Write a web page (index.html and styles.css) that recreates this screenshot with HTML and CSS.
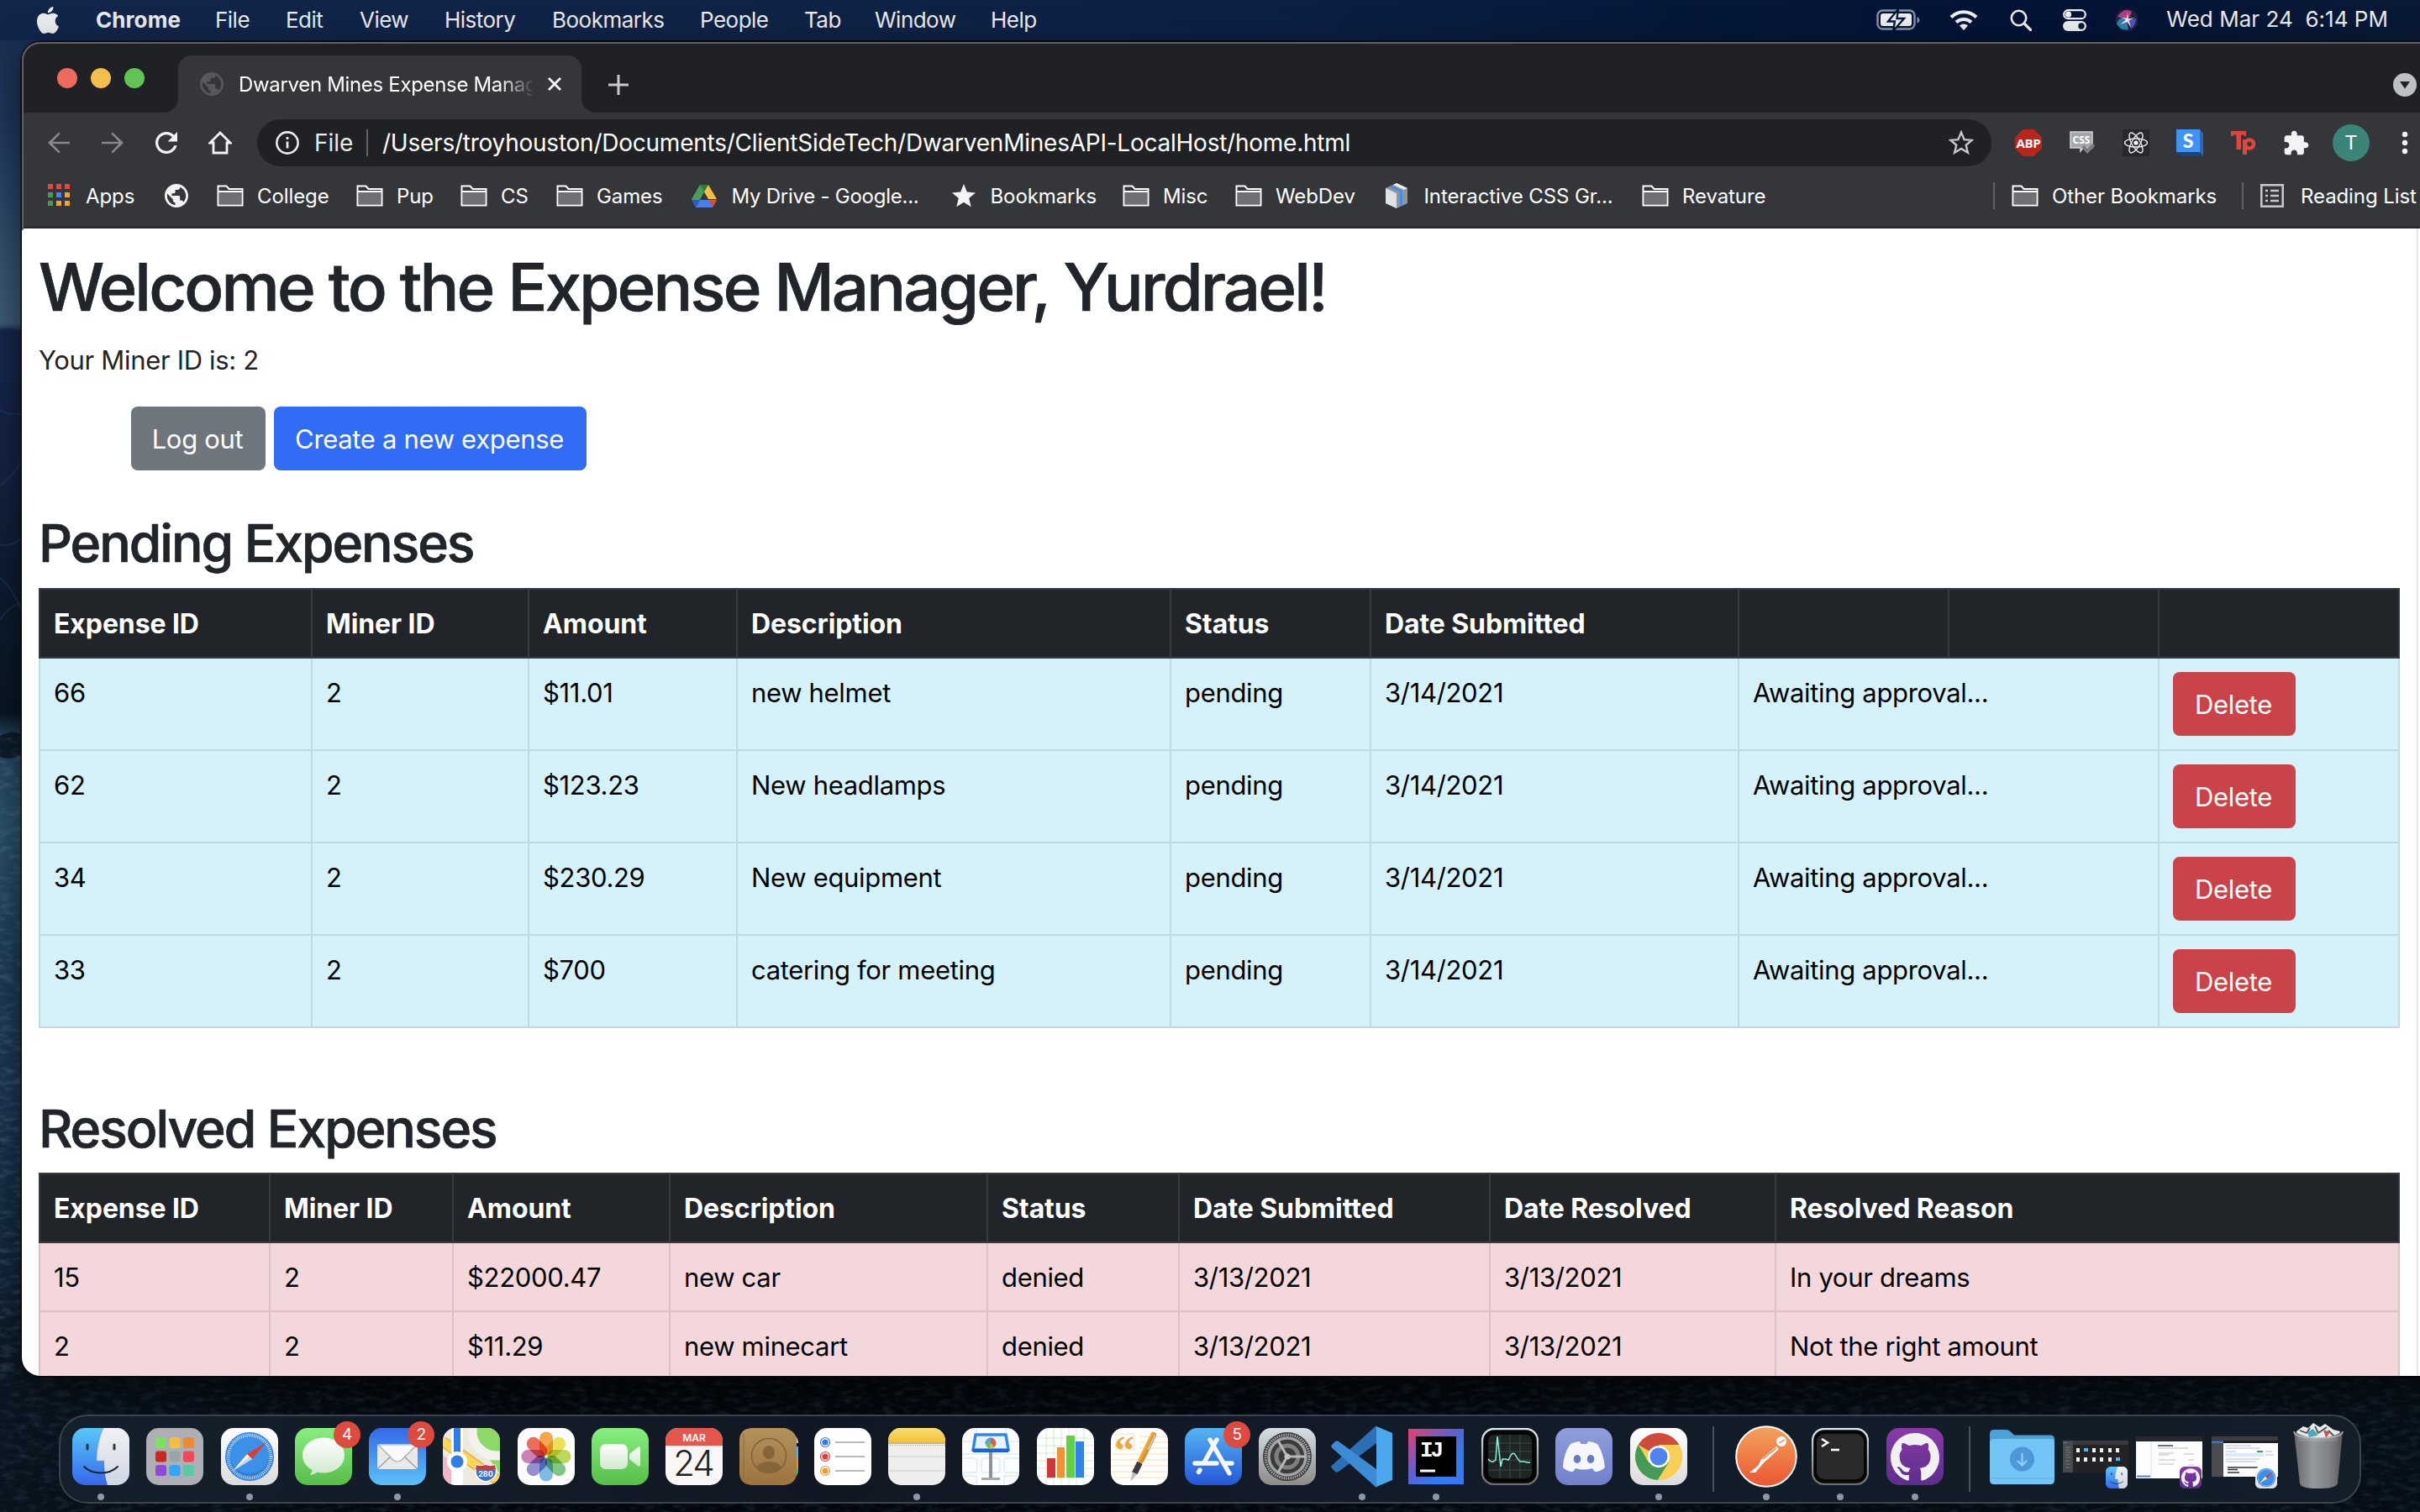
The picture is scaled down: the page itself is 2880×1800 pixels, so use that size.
FILE: index.html
```html
<!DOCTYPE html>
<html lang="en">
<head>
<meta charset="utf-8">
<title>Dwarven Mines Expense Manager</title>
<link rel="stylesheet" href="styles.css">
</head>
<body>
<svg class="defs" width="0" height="0">
  <defs>
    <linearGradient id="gBlue" x1="0" y1="0" x2="0" y2="1"><stop offset="0" stop-color="#5ac8f9"/><stop offset="1" stop-color="#3667ea"/></linearGradient>
    <linearGradient id="gMail" x1="0" y1="0" x2="0" y2="1"><stop offset="0" stop-color="#3668e8"/><stop offset="1" stop-color="#5bc1f8"/></linearGradient>
    <linearGradient id="gStore" x1="0" y1="0" x2="0" y2="1"><stop offset="0" stop-color="#54b4f2"/><stop offset="1" stop-color="#2657d8"/></linearGradient>
    <linearGradient id="gGreen" x1="0" y1="0" x2="0" y2="1"><stop offset="0" stop-color="#86ef7f"/><stop offset="1" stop-color="#58bd49"/></linearGradient>
    <linearGradient id="gWhite" x1="0" y1="0" x2="0" y2="1"><stop offset="0" stop-color="#fff"/><stop offset="1" stop-color="#dcdcdc"/></linearGradient>
    <linearGradient id="gFace" x1="0" y1="0" x2="0" y2="1"><stop offset="0" stop-color="#f1f1f3"/><stop offset="1" stop-color="#ced6e4"/></linearGradient>
    <linearGradient id="gTan" x1="0" y1="0" x2="0" y2="1"><stop offset="0" stop-color="#b3925c"/><stop offset="1" stop-color="#9c7340"/></linearGradient>
    <linearGradient id="gYellow" x1="0" y1="0" x2="0" y2="1"><stop offset="0" stop-color="#fbdf6e"/><stop offset="1" stop-color="#f2c23a"/></linearGradient>
    <linearGradient id="gGear" x1="0" y1="0" x2="0" y2="1"><stop offset="0" stop-color="#d6dfe4"/><stop offset="1" stop-color="#8c8a86"/></linearGradient>
    <linearGradient id="gDisc" x1="0" y1="0" x2="0" y2="1"><stop offset="0" stop-color="#8f9edb"/><stop offset="1" stop-color="#7180cb"/></linearGradient>
    <linearGradient id="gPost" x1="0" y1="0" x2="0" y2="1"><stop offset="0" stop-color="#f2a35f"/><stop offset="1" stop-color="#ec5430"/></linearGradient>
    <linearGradient id="gGit" x1="0" y1="0" x2="0" y2="1"><stop offset="0" stop-color="#8a3aa8"/><stop offset="1" stop-color="#5c2e8c"/></linearGradient>
    <linearGradient id="gIj" x1="0" y1="0" x2="1" y2="1"><stop offset="0" stop-color="#e8406c"/><stop offset=".45" stop-color="#5a62d0"/><stop offset=".7" stop-color="#2f7bf0"/><stop offset="1" stop-color="#3a78f0"/></linearGradient>
    <linearGradient id="gTrash" x1="0" y1="0" x2="1" y2="0"><stop offset="0" stop-color="#6d6f71"/><stop offset=".4" stop-color="#a0a2a4"/><stop offset=".75" stop-color="#85878a"/><stop offset="1" stop-color="#5d5f61"/></linearGradient>
    <linearGradient id="gMetal" x1="0" y1="0" x2="0" y2="1"><stop offset="0" stop-color="#d8eef0"/><stop offset="1" stop-color="#6b6b6b"/></linearGradient>
    <linearGradient id="gPen" x1="0" y1="0" x2="1" y2="0"><stop offset="0" stop-color="#f7b545"/><stop offset="1" stop-color="#d27d1d"/></linearGradient>
    <linearGradient id="gCam" x1="0" y1="0" x2="0" y2="1"><stop offset="0" stop-color="#fff"/><stop offset="1" stop-color="#cfe8ca"/></linearGradient>
    <clipPath id="tile"><rect width="68" height="68" rx="15"/></clipPath>
    <filter id="sea" x="0" y="0" width="100%" height="100%"><feTurbulence type="fractalNoise" baseFrequency=".06 .16" numOctaves="4" seed="4"/><feColorMatrix values="0 0 0 0 .25  0 0 0 0 .42  0 0 0 0 .55  1.6 0 0 0 -.72"/></filter>
  </defs>
  <symbol id="folder" viewBox="0 0 32 26"><path d="M1.500 24.500v-23h10l3 3.500h16v19.500z" fill="none" stroke="#fff" stroke-width="2"/><path d="M3 9h26v14H3z" fill="#6f7073"/><path d="M2 8h28" stroke="#fff" stroke-width="2"/></symbol>
  <symbol id="globe" viewBox="2 2 20 20"><path d="M12 2C6.480 2 2 6.480 2 12s4.480 10 10 10 10-4.480 10-10S17.520 2 12 2zm-1 17.930c-3.950-.49-7-3.850-7-7.930 0-.62.08-1.210.21-1.790L9 15v1c0 1.100.9 2 2 2v1.930zm6.900-2.540c-.26-.81-1-1.390-1.900-1.390h-1v-3c0-.55-.45-1-1-1H8v-2h2c.55 0 1-.45 1-1V7h2c1.100 0 2-.9 2-2v-.41c2.930 1.190 5 4.060 5 7.410 0 2.080-.8 3.970-2.100 5.390z"/></symbol>
  <symbol id="finder" viewBox="0 0 68 68"><g clip-path="url(#tile)"><rect width="68" height="68" fill="url(#gBlue)"/><path d="M37 0c-5 12-8 25-8 39h9c0 11 1 20 4 29h26V0z" fill="url(#gFace)"/></g><path d="M29 39h9.500M37 0c-5 12-8 25-8 39" fill="none" stroke="#8fa3c4" stroke-width=".6"/><path d="M18 20v5M50 20v5" stroke="#2b3645" stroke-width="3" stroke-linecap="round"/><path d="M14 46c10 10 30 10 40 0" fill="none" stroke="#1c2530" stroke-width="2" stroke-linecap="round"/></symbol>
  <symbol id="safari" viewBox="0 0 68 68"><rect width="68" height="68" rx="15" fill="url(#gWhite)"/><circle cx="34" cy="34" r="29" fill="#2f7de0"/><circle cx="34" cy="30" r="24" fill="#46a2ee" opacity=".55"/><circle cx="34" cy="34" r="25.500" fill="none" stroke="#dcebfa" stroke-width="4" stroke-dasharray=".9 1.325"/><path d="M54 17L31 31l6 6z" fill="#e2392f"/><path d="M14 51l17-20 6 6z" fill="#f4f4f4"/><path d="M14 51l20-17 3 3z" fill="#cfd4da"/></symbol>
  <symbol id="github" viewBox="0 0 68 68"><rect width="68" height="68" rx="15" fill="url(#gGit)"/><path transform="translate(5 6) scale(3.625)" fill="#f1f1f3" d="M8 0C3.580 0 0 3.580 0 8c0 3.540 2.290 6.530 5.470 7.590.4.070.55-.17.55-.38 0-.19-.01-.82-.01-1.490-2.010.37-2.530-.49-2.690-.94-.09-.23-.48-.94-.82-1.130-.28-.15-.68-.52-.01-.53.63-.01 1.080.58 1.230.82.72 1.210 1.870.87 2.330.66.07-.52.28-.87.51-1.070-1.780-.2-3.640-.89-3.640-3.950 0-.87.31-1.590.82-2.150-.08-.2-.36-1.020.08-2.120 0 0 .67-.21 2.200.82.64-.18 1.320-.27 2-.27s1.360.09 2 .27c1.530-1.040 2.200-.82 2.200-.82.44 1.100.16 1.920.08 2.120.51.56.82 1.270.82 2.150 0 3.070-1.870 3.750-3.650 3.950.29.25.54.73.54 1.480 0 1.070-.01 1.930-.01 2.200 0 .21.15.46.55.38A8.010 8.010 0 0 0 16 8c0-4.420-3.580-8-8-8z"/></symbol>
</svg>

<svg class="waves" width="2880" height="162"><rect width="2880" height="162" filter="url(#sea)"/></svg>
<svg class="shore" width="26" height="1590" viewBox="0 0 26 1590" preserveAspectRatio="none">
  <path d="M0 345q13-5 26 2v58q-14 10-26 5z" fill="#17284e"/>
  <path d="M0 440q12 8 26 4M0 530q16-12 26-30M0 600q14 4 26-8M0 690q12-18 26-20M0 640q14 10 26 40" fill="none" stroke="#2a4a70" stroke-width="2" opacity=".6"/>
  <path d="M0 828q14-8 26-2l0 24q-13 8-26 3z" fill="#050c16"/>
  <rect y="830" width="26" height="760" filter="url(#sea)" opacity=".5"/>
</svg>

<header class="menubar">
  <nav class="menus">
    <svg class="apple" viewBox="2.600 0 18.800 24"><path fill="#e9ebef" d="M12.152 6.896c-.948 0-2.415-1.078-3.960-1.040-2.040.027-3.910 1.183-4.961 3.014-2.117 3.675-.546 9.103 1.519 12.090 1.013 1.454 2.208 3.090 3.792 3.039 1.520-.065 2.090-.987 3.935-.987 1.831 0 2.350.987 3.960.948 1.637-.026 2.676-1.480 3.676-2.948 1.156-1.688 1.636-3.325 1.662-3.415-.039-.013-3.182-1.221-3.220-4.857-.026-3.040 2.480-4.494 2.597-4.559-1.429-2.090-3.623-2.324-4.390-2.376-2-.156-3.675 1.090-4.610 1.090zM15.530 3.830c.843-1.012 1.400-2.427 1.245-3.830-1.207.052-2.662.805-3.532 1.818-.78.896-1.454 2.338-1.273 3.714 1.338.104 2.715-.688 3.559-1.701"/></svg>
    <b>Chrome</b><span>File</span><span>Edit</span><span>View</span><span>History</span><span>Bookmarks</span><span>People</span><span>Tab</span><span>Window</span><span>Help</span>
  </nav>
  <div class="status">
    <svg width="52" height="28" viewBox="0 0 52 28"><rect x="1.500" y="2.500" width="44" height="22" rx="6" fill="none" stroke="#8b93a8" stroke-width="2.400"/><rect x="5" y="6" width="37" height="15" rx="3" fill="#eceef2"/><path d="M48.500 10v8q3-1.500 3-4t-3-4z" fill="#8b93a8"/><path d="M26 1L14 15.500h8L20 27l13-15h-8.500z" fill="#eceef2" stroke="#06173a" stroke-width="2.400"/></svg>
    <svg width="34" height="26" viewBox="0 0 34 26"><g fill="none" stroke="#eceef2" stroke-width="4"><path d="M2 9.500a21 21 0 0 1 30 0"/><path d="M8 15.500a13 13 0 0 1 18 0"/></g><path d="M12 19.500a7.500 7.500 0 0 1 10 0L17 25z" fill="#eceef2"/></svg>
    <svg width="26" height="26" viewBox="0 0 26 26"><circle cx="10.500" cy="10.500" r="8.700" fill="none" stroke="#eceef2" stroke-width="2.600"/><path d="M17 17l7.500 7.500" stroke="#eceef2" stroke-width="3.200" stroke-linecap="round"/></svg>
    <svg width="28" height="26" viewBox="0 0 28 26"><rect x="1.200" y="1.200" width="25.600" height="10" rx="5" fill="none" stroke="#eceef2" stroke-width="2.200"/><circle cx="6.500" cy="6.200" r="3.600" fill="#eceef2"/><rect y="14" width="28" height="12" rx="6" fill="#eceef2"/><circle cx="22" cy="20" r="3.700" fill="#06173a"/></svg>
    <svg width="28" height="28" viewBox="0 0 28 28"><circle cx="14" cy="14" r="13.500" fill="#23243f"/><path d="M3 10q8-12 17-6l-4 10z" fill="#d2478d" opacity=".8"/><path d="M2 18q4-10 12-5l2 12q-9 2-14-7z" fill="#2f9ac9" opacity=".8"/><path d="M14 14l11-2q0 8-6 12z" fill="#5b5fd0" opacity=".85"/><path d="M15 5l.8 7.500 7.200-1.500-6.500 3.500 2.500 8-4.500-6.500-8 3 6.500-5.500-4.500-2.500 5.500.8z" fill="#fff" opacity=".9"/></svg>
    <time>Wed Mar 24&nbsp; 6:14 PM</time>
  </div>
</header>

<main class="window">
  <div class="tabstrip">
    <i class="light red"></i><i class="light amber"></i><i class="light green"></i>
    <div class="tab">
      <svg width="28" height="28" fill="#56585d"><use href="#globe"/></svg>
      <span class="tab-title">Dwarven Mines Expense Manager</span>
      <svg width="18" height="18" viewBox="0 0 18 18"><path d="M2 2l14 14M16 2L2 16" stroke="#f1f3f4" stroke-width="2.800"/></svg>
    </div>
    <svg class="newtab" width="24" height="24" viewBox="0 0 24 24"><path d="M12 0v24M0 12h24" stroke="#c6c9cd" stroke-width="3"/></svg>
    <svg class="tabsearch" width="28" height="28" viewBox="0 0 28 28"><circle cx="14" cy="14" r="14" fill="#bdc1c6"/><path d="M8 10h12l-6 8.500z" fill="#202124"/></svg>
  </div>

  <div class="toolbar">
    <svg width="26" height="26" viewBox="4 4 16 16" fill="#86888b"><path d="M20 11.200H7.300l5.700-5.800L12 4.300l-8 7.700 8 7.700 1-1.100-5.700-5.800H20z"/></svg>
    <svg width="26" height="26" viewBox="4 4 16 16" fill="#86888b"><path d="M4 11.200h12.700L11 5.400l1-1.100 8 7.700-8 7.700-1-1.100 5.700-5.800H4z"/></svg>
    <svg width="26" height="26" viewBox="4 4 16 16" fill="#f1f3f4"><path d="M17.650 6.350C16.200 4.900 14.210 4 12 4c-4.420 0-7.990 3.580-7.990 8s3.570 8 7.990 8c3.730 0 6.840-2.550 7.730-6h-2.080c-.82 2.330-3.040 4-5.650 4-3.310 0-6-2.690-6-6s2.690-6 6-6c1.660 0 3.140.69 4.220 1.780L13 11h7V4l-2.350 2.350z"/></svg>
    <svg width="28" height="28" viewBox="0 0 28 28"><path d="M2 14L14 2l12 12h-4v12H6V14z" fill="none" stroke="#f1f3f4" stroke-width="2.800"/></svg>
    <div class="omnibox">
      <svg width="28" height="28" viewBox="0 0 28 28"><circle cx="14" cy="14" r="12.600" fill="none" stroke="#e8eaed" stroke-width="2.600"/><path d="M14 12.500v8M14 7v3" stroke="#e8eaed" stroke-width="2.800"/></svg>
      <span class="scheme">File</span>
      <span class="url">/Users/troyhouston/Documents/ClientSideTech/DwarvenMinesAPI-LocalHost/home.html</span>
      <svg width="30" height="30" viewBox="0 0 30 30"><path d="M15 2.500l3.600 8.700 9 .7-6.900 5.900 2.200 9L15 22l-7.900 4.800 2.200-9-6.900-5.900 9-.7z" fill="none" stroke="#c5c8cc" stroke-width="2.400"/></svg>
    </div>
    <div class="extensions">
      <svg width="32" height="32" viewBox="0 0 32 32"><path d="M9.500 0h13L32 9.500v13L22.500 32h-13L0 22.500v-13z" fill="#b8261b"/><text x="16" y="21.500" class="abp">ABP</text></svg>
      <svg width="32" height="32" viewBox="0 0 32 32"><path d="M2 3h26v19H17l-3 4v-4H2z" fill="#a5a6a8" stroke="#d4d4d4" stroke-width="1.500"/><text x="15" y="17" class="css">CSS</text><path d="M17 20l5 6 8-8" fill="none" stroke="#7d7e80" stroke-width="4"/></svg>
      <svg width="32" height="32" viewBox="0 0 32 32"><rect width="32" height="32" fill="#27282b"/><g fill="none" stroke="#f2f2f2" stroke-width="1.400"><ellipse cx="16" cy="16" rx="13.500" ry="5"/><ellipse cx="16" cy="16" rx="13.500" ry="5" transform="rotate(60 16 16)"/><ellipse cx="16" cy="16" rx="13.500" ry="5" transform="rotate(120 16 16)"/></g><circle cx="16" cy="16" r="2.600" fill="#fff"/></svg>
      <svg width="32" height="32" viewBox="0 0 32 32"><path d="M0 27l5 5h27V5l-4-4z" fill="#1d4377"/><path d="M28 0l4 5v27l-4-5z" fill="#2c66b8"/><rect width="28" height="27" fill="#3f93f5"/><text x="14" y="22" class="ess">S</text></svg>
      <svg width="32" height="32" viewBox="0 0 32 32"><path d="M1 2h18v6h-2.500V6.500H13V24H7.500V6.500H4V8H1z" fill="#dd473e"/><path d="M17.500 12v18" stroke="#dd473e" stroke-width="5"/><circle cx="23" cy="17.500" r="5" fill="none" stroke="#dd473e" stroke-width="4.600"/></svg>
      <svg width="30" height="30" viewBox="1.500 .5 22 22" fill="#f1f3f4"><path d="M20.500 11H19V7c0-1.100-.9-2-2-2h-4V3.500C13 2.120 11.880 1 10.500 1S8 2.120 8 3.500V5H4c-1.100 0-1.990.9-1.990 2v3.800H3.500c1.490 0 2.700 1.210 2.700 2.700s-1.210 2.700-2.700 2.700H2V20c0 1.100.9 2 2 2h3.800v-1.500c0-1.490 1.210-2.700 2.700-2.700 1.490 0 2.700 1.210 2.700 2.700V22H17c1.100 0 2-.9 2-2v-4h1.500c1.380 0 2.500-1.120 2.500-2.500S21.880 11 20.500 11z"/></svg>
    </div>
    <span class="avatar">T</span>
    <svg class="kebab" width="8" height="28" viewBox="0 0 8 28" fill="#f1f3f4"><circle cx="4" cy="4" r="3.200"/><circle cx="4" cy="14" r="3.200"/><circle cx="4" cy="24" r="3.200"/></svg>
  </div>

  <div class="bookmarks">
    <a class="apps"><svg width="26" height="28" viewBox="0 0 26 28"><g fill="#e8453c"><path d="M0 0h6v6H0zM10 0h6v6h-6zM20 0h6v6h-6z"/></g><path d="M0 10h6v6H0zM0 20h6v6H0z" fill="#4a9a52"/><path d="M10 10h6v6h-6z" fill="#4285f4"/><path d="M10 20h6v6h-6zM20 10h6v6h-6zM20 20h6v6h-6z" fill="#eba436"/></svg>Apps</a>
    <a><svg width="28" height="28" fill="#f1f3f4"><use href="#globe"/></svg></a>
    <a><svg width="32" height="26"><use href="#folder"/></svg>College</a>
    <a><svg width="32" height="26"><use href="#folder"/></svg>Pup</a>
    <a><svg width="32" height="26"><use href="#folder"/></svg>CS</a>
    <a><svg width="32" height="26"><use href="#folder"/></svg>Games</a>
    <a class="tight"><svg width="30" height="27" viewBox="0 0 30 27"><path d="M10 0h10l10 17H20z" fill="#f4bf42"/><path d="M10 0l5 8.500L5 27 0 17z" fill="#4a9e55"/><path d="M10 0h10l-5 8.500z" fill="#2c7a3f"/><path d="M5 27l5-9h20l-5 9z" fill="#4a7fe8"/><path d="M21 18h9l-5 9z" fill="#dd4b3c"/><path d="M5 27L0 18h10z" fill="#2e5cc5"/></svg>My Drive - Google...</a>
    <a class="roomy"><svg width="28" height="28" viewBox="0 0 28 28"><path d="M14 0l3.800 9.600 10.200.8-7.800 6.700 2.500 10.100L14 21.700l-8.700 5.500 2.500-10.100L0 10.400l10.200-.8z" fill="#f1f3f4"/></svg>Bookmarks</a>
    <a><svg width="32" height="26"><use href="#folder"/></svg>Misc</a>
    <a><svg width="32" height="26"><use href="#folder"/></svg>WebDev</a>
    <a class="roomy"><svg width="30" height="30" viewBox="0 0 30 30"><path d="M15 0l13 6v18l-13 6-13-6V6z" fill="#8f959b"/><path d="M2 6l13 6v18L2 24z" fill="#dfe2e5"/><path d="M9 3l13 6v17l-3 1.500V10L6 4.500z" fill="#3b8fe6"/><path d="M15 0l13 6-4 2L11 2z" fill="#e9edf0"/></svg>Interactive CSS Gr...</a>
    <a><svg width="32" height="26"><use href="#folder"/></svg>Revature</a>
    <a class="ruled"><svg width="32" height="26"><use href="#folder"/></svg>Other Bookmarks</a>
    <a class="ruled roomy"><svg width="28" height="28" viewBox="0 0 28 28"><rect x="1.300" y="1.300" width="25.400" height="25.400" fill="none" stroke="#c4c6c8" stroke-width="2.600"/><path d="M6 8h3M12 8h10M6 14h3M12 14h10M6 20h3M12 20h10" stroke="#c4c6c8" stroke-width="2.400"/></svg>Reading List</a>
  </div>

  <section class="page">
    <h1>Welcome to the Expense Manager, Yurdrael!</h1>
    <p class="miner">Your Miner ID is: 2</p>
    <div class="actions"><button class="btn secondary">Log out</button><button class="btn primary">Create a new expense</button></div>

    <h2>Pending Expenses</h2>
    <table class="pending">
      <colgroup><col class="p1"><col class="p2"><col class="p3"><col class="p4"><col class="p5"><col class="p6"><col class="p7"><col class="p7"><col class="p9"></colgroup>
      <thead><tr><th>Expense ID</th><th>Miner ID</th><th>Amount</th><th>Description</th><th>Status</th><th>Date Submitted</th><th></th><th></th><th></th></tr></thead>
      <tbody>
        <tr><td>66</td><td>2</td><td>$11.01</td><td>new helmet</td><td>pending</td><td>3/14/2021</td><td colspan="2">Awaiting approval...</td><td><button class="btn danger">Delete</button></td></tr>
        <tr><td>62</td><td>2</td><td>$123.23</td><td>New headlamps</td><td>pending</td><td>3/14/2021</td><td colspan="2">Awaiting approval...</td><td><button class="btn danger">Delete</button></td></tr>
        <tr><td>34</td><td>2</td><td>$230.29</td><td>New equipment</td><td>pending</td><td>3/14/2021</td><td colspan="2">Awaiting approval...</td><td><button class="btn danger">Delete</button></td></tr>
        <tr><td>33</td><td>2</td><td>$700</td><td>catering for meeting</td><td>pending</td><td>3/14/2021</td><td colspan="2">Awaiting approval...</td><td><button class="btn danger">Delete</button></td></tr>
      </tbody>
    </table>

    <h2 class="second">Resolved Expenses</h2>
    <table class="resolved">
      <colgroup><col class="r1"><col class="r2"><col class="r3"><col class="r4"><col class="r5"><col class="r6"><col class="r7"><col class="r8"></colgroup>
      <thead><tr><th>Expense ID</th><th>Miner ID</th><th>Amount</th><th>Description</th><th>Status</th><th>Date Submitted</th><th>Date Resolved</th><th>Resolved Reason</th></tr></thead>
      <tbody>
        <tr><td>15</td><td>2</td><td>$22000.47</td><td>new car</td><td>denied</td><td>3/13/2021</td><td>3/13/2021</td><td>In your dreams</td></tr>
        <tr><td>2</td><td>2</td><td>$11.29</td><td>new minecart</td><td>denied</td><td>3/13/2021</td><td>3/13/2021</td><td>Not the right amount</td></tr>
      </tbody>
    </table>
  </section>
</main>

<footer class="dock">
  <div class="slot running"><svg class="tile"><use href="#finder"/></svg></div>
  <div class="slot"><svg class="tile" viewBox="0 0 68 68"><rect width="68" height="68" rx="15" fill="#adafb4"/><g><rect x="11" y="11" width="13" height="13" rx="3" fill="#7ae35a"/><rect x="27.500" y="11" width="13" height="13" rx="3" fill="#f6bd40"/><rect x="44" y="11" width="13" height="13" rx="3" fill="#ea8b34"/><rect x="11" y="27.500" width="13" height="13" rx="3" fill="#c9281f"/><rect x="27.500" y="27.500" width="13" height="13" rx="3" fill="#9aa3a8"/><rect x="44" y="27.500" width="13" height="13" rx="3" fill="#ee4a5c"/><rect x="11" y="44" width="13" height="13" rx="3" fill="#9247d8"/><rect x="27.500" y="44" width="13" height="13" rx="3" fill="#35a6f5"/><rect x="44" y="44" width="13" height="13" rx="3" fill="#5ec7a4"/></g></svg></div>
  <div class="slot running"><svg class="tile"><use href="#safari"/></svg></div>
  <div class="slot"><svg class="tile" viewBox="0 0 68 68"><rect width="68" height="68" rx="15" fill="url(#gGreen)"/><path d="M34 11.500c14 0 25 9 25 21s-11 21-25 21c-2.600 0-5-.3-7.300-.9-2.400 1.900-5.200 3.100-9 3.400 1.500-1.600 2.600-3.600 2.800-6C13.500 46.200 9 40 9 32.500c0-12 11-21 25-21z" fill="url(#gCam)"/></svg><b class="badge">4</b></div>
  <div class="slot running"><svg class="tile" viewBox="0 0 68 68"><rect width="68" height="68" rx="15" fill="url(#gMail)"/><rect x="10" y="19" width="48" height="30" rx="3" fill="#e9e9e9"/><path d="M11 48l17-16M57 48L40 32" stroke="#9b9b9b" stroke-width="1.200"/><path d="M11 20l18 18q5 4 10 0l18-18z" fill="#fafafa" stroke="#a8a8a8" stroke-width="1.200"/></svg><b class="badge">2</b></div>
  <div class="slot"><svg class="tile" viewBox="0 0 68 68"><g clip-path="url(#tile)"><rect width="68" height="68" fill="#ece9e1"/><path d="M30 0h38v55z" fill="#8cd96a"/><circle cx="64" cy="4" r="29" fill="none" stroke="#f3f1ec" stroke-width="11"/><path d="M0 32v36h10V40z" fill="#f3b6c4"/><path d="M0 16l68 48" stroke="#e8b13f" stroke-width="13"/><path d="M0 16l68 48" stroke="#fbd659" stroke-width="10"/><path d="M17 0v68" stroke="#fff" stroke-width="14"/><path d="M17 0v38" stroke="#2f7de6" stroke-width="8"/><circle cx="17" cy="40" r="12" fill="#fff"/><circle cx="17" cy="40" r="7.500" fill="#2f7de6"/><path d="M40 44q4 2 11 0 7 2 11 0 6 16-11 20-16-4-11-20z" fill="#3b71c9" stroke="#fff" stroke-width="1.500"/><path d="M40 44q4 2 11 0 7 2 11 0l1 5H39z" fill="#d23b35"/><text x="51" y="58" class="shield">280</text></g></svg></div>
  <div class="slot"><svg class="tile petals" viewBox="0 0 68 68"><rect width="68" height="68" rx="15" fill="#fdfdfd"/><g class="blend"><rect x="26" y="4.500" width="16" height="28" rx="8" fill="#f5a13c"/><rect x="26" y="4.500" width="16" height="28" rx="8" fill="#ece04a" transform="rotate(45 34 34)"/><rect x="26" y="4.500" width="16" height="28" rx="8" fill="#b9d651" transform="rotate(90 34 34)"/><rect x="26" y="4.500" width="16" height="28" rx="8" fill="#77c37c" transform="rotate(135 34 34)"/><rect x="26" y="4.500" width="16" height="28" rx="8" fill="#77b7e8" transform="rotate(180 34 34)"/><rect x="26" y="4.500" width="16" height="28" rx="8" fill="#8e86cc" transform="rotate(225 34 34)"/><rect x="26" y="4.500" width="16" height="28" rx="8" fill="#c878b2" transform="rotate(270 34 34)"/><rect x="26" y="4.500" width="16" height="28" rx="8" fill="#ee6152" transform="rotate(315 34 34)"/></g></svg></div>
  <div class="slot"><svg class="tile" viewBox="0 0 68 68"><rect width="68" height="68" rx="15" fill="url(#gGreen)"/><rect x="10" y="19" width="33" height="30" rx="7" fill="url(#gCam)"/><path d="M45 31l10-8q3-2 3 1v20q0 3-3 1l-10-8z" fill="url(#gCam)"/></svg></div>
  <div class="slot"><svg class="tile" viewBox="0 0 68 68"><g clip-path="url(#tile)"><rect width="68" height="68" fill="#f8f7f6"/><rect width="68" height="21" fill="#e4574c"/></g><text x="34" y="16" class="month">MAR</text><text x="33" y="57" class="day">24</text></svg></div>
  <div class="slot"><svg class="tile wide" viewBox="0 0 70 68"><path d="M60 10h7q3 3 3 8H60z" fill="#c8c8c8"/><path d="M60 22h10v14H60z" fill="#55b4ea"/><path d="M60 36h10v12H60z" fill="#ef8b2e"/><path d="M60 48h10q0 8-4 11h-6z" fill="#62c554"/><path d="M15 0h39q14 4 14 15v38q0 13-14 15H15Q0 67 0 53V15Q0 1 15 0z" fill="url(#gTan)"/><path d="M5 6v56" stroke="#7c5c33" stroke-width="1" opacity=".6"/><circle cx="35" cy="33" r="20.500" fill="none" stroke="#82613a" stroke-width="1.500"/><ellipse cx="35" cy="29" rx="7" ry="8" fill="#87653a"/><path d="M20 47q4-7 15-7t15 7q-6 7-15 7t-15-7z" fill="#87653a"/></svg></div>
  <div class="slot"><svg class="tile" viewBox="0 0 68 68"><rect width="68" height="68" rx="15" fill="#fff"/><path d="M25 17h35M25 34h35M25 51h35" stroke="#b9b9bb" stroke-width="1.800"/><g fill="none" stroke-width="1.200"><circle cx="13" cy="17" r="5.500" stroke="#3478f6"/><circle cx="13" cy="34" r="5.500" stroke="#e0403a"/><circle cx="13" cy="51" r="5.500" stroke="#ef9a37"/></g><circle cx="13" cy="17" r="3.600" fill="#3478f6"/><circle cx="13" cy="34" r="3.600" fill="#e0403a"/><circle cx="13" cy="51" r="3.600" fill="#ef9a37"/></svg></div>
  <div class="slot running"><svg class="tile" viewBox="0 0 68 68"><g clip-path="url(#tile)"><rect width="68" height="68" fill="#efeeec"/><rect width="68" height="17" fill="url(#gYellow)"/><path d="M0 18h68" stroke="#a8a6a0" stroke-width="1.500"/><path d="M2 20.500h66" stroke="#a3a19c" stroke-width="1.200" stroke-dasharray="1.200 1.500"/><path d="M0 34h68M0 51h68" stroke="#cfcdca"/></g></svg></div>
  <div class="slot"><svg class="tile" viewBox="0 0 68 68"><rect width="68" height="68" rx="15" fill="#fdfdfe"/><g clip-path="url(#tile)"><path d="M0 16h68M0 31h68M17 0v16M52 0v16" stroke="#cbe2f5"/><g fill="none" stroke="#cbe2f5"><rect x="-6" y="36" width="24" height="17" rx="3"/><rect x="23" y="36" width="22" height="17" rx="3"/><rect x="50" y="36" width="24" height="17" rx="3"/><path d="M0 57h17v11M50 68V57h18"/></g></g><path d="M16 8h36l3 18H13z" fill="#e9f3fd" stroke="#2f85ec" stroke-width="3.400"/><path d="M12 25h44l-1 4H13z" fill="#1f5fd0"/><path d="M32 29h4v31h-4z" fill="#8b9099"/><path d="M23 59h22v3H23z" fill="#a5a7ab"/><circle cx="34" cy="18" r="6.500" fill="#6fc24f"/><path d="M34 18v-6.500a6.500 6.500 0 0 1 4 11z" fill="#e05a4a"/><path d="M34 18v-6.500a6.500 6.500 0 0 0-6.500 6.500z" fill="#4aa6e8"/><path d="M34 18l4 5a6.500 6.500 0 0 1-5 1.300z" fill="#f0b63c"/></svg></div>
  <div class="slot"><svg class="tile" viewBox="0 0 68 68"><rect width="68" height="68" rx="15" fill="#fff"/><path clip-path="url(#tile)" d="M0 12h68M0 21h68M0 30h68M0 39h68M0 48h68M0 57h68M11 0v68M20 0v68M29 0v68M38 0v68M47 0v68M56 0v68" stroke="#c9ecc2" stroke-width=".9"/><path d="M12 36h10v23H12z" fill="#d0353b"/><path d="M24 23h9v36h-9z" fill="#ef9233"/><path d="M35 9h10v50H35z" fill="#62cf45"/><path d="M46 16h10v43H46z" fill="#2f83ea"/></svg></div>
  <div class="slot"><svg class="tile" viewBox="0 0 68 68"><rect width="68" height="68" rx="15" fill="#fefefd"/><path d="M34 10h32M34 17h34M34 24h34M2 31h66M0 38h68M0 45h68M0 52h68M2 59h64" stroke="#f9dcb4"/><path d="M6 7h22v19H6z" fill="none" stroke="#f7dfc0"/><text x="16" y="43" class="quote">“</text><g transform="rotate(26 38 34)"><rect x="34.500" y="2" width="7" height="40" rx="3" fill="url(#gPen)"/><rect x="34.500" y="42" width="7" height="14" fill="#3a3a3c"/><path d="M35 56h6l-3 11z" fill="#b9bec4"/><path d="M40 4v20" stroke="#c9d2dc" stroke-width="1.600"/></g></svg></div>
  <div class="slot"><svg class="tile" viewBox="0 0 68 68"><rect width="68" height="68" rx="15" fill="url(#gStore)"/><g stroke="#f5f8fd" stroke-width="5.400" stroke-linecap="round"><path d="M38 14L23 41M30 14l23 40M12 42h26M48 42h8M18 50l-1.500 2.500"/></g></svg><b class="badge">5</b></div>
  <div class="slot"><svg class="tile" viewBox="0 0 68 68"><rect width="68" height="68" rx="15" fill="url(#gGear)"/><circle cx="34" cy="34" r="29" fill="#3a3b3d"/><circle cx="34" cy="34" r="26" fill="none" stroke="#aeb0b2" stroke-width="3" stroke-dasharray="1.400 1.320"/><circle cx="34" cy="34" r="22" fill="none" stroke="#a0a2a4" stroke-width="3.500"/><circle cx="34" cy="34" r="13" fill="none" stroke="#7d7f81" stroke-width="5"/><path d="M34 34h22M34 34L23 15M34 34L23 53" stroke="#b5b7b9" stroke-width="3"/><circle cx="34" cy="34" r="3.500" fill="#c0c2c4"/></svg></div>
  <div class="slot running"><svg class="vscode" viewBox="0 0 74 74"><path d="M54 1l19 8v56l-19 8z" fill="#4ba7ec"/><path d="M54 0v21L9 55q-2 1.500-4 0l-4-4q-1.500-2 0-3.500z" fill="#2d6fb5"/><path d="M54 74V52L9 19q-2-1.500-4 0l-4 4q-1.500 2 0 3.500z" fill="#3c8bd4"/></svg></div>
  <div class="slot running"><svg class="tile" viewBox="0 0 68 68"><rect x="1" y="1" width="66" height="66" fill="url(#gIj)"/><rect x="10" y="10" width="48" height="48" fill="#000"/><text x="15" y="34" class="ij">IJ</text><path d="M15 51h18" stroke="#fff" stroke-width="3"/></svg></div>
  <div class="slot"><svg class="tile" viewBox="0 0 68 68"><rect x="1" y="1" width="66" height="66" rx="14" fill="#050505" stroke="url(#gMetal)" stroke-width="2.400"/><rect x="8" y="8" width="52" height="52" rx="7" fill="#1e2625"/><path d="M8 18h52M8 28h52M8 38h52M8 50h52M22 8v52M34 8v52M46 8v52" stroke="#41504e" stroke-width=".8"/><path d="M8 37q3 4 6 3l3-2 2-28 4 36 2-9h4l3 1 4-7q3-2 5 2t5 7h5l4 1h3" fill="none" stroke="#8ff0dc" stroke-width="1.500"/></svg></div>
  <div class="slot"><svg class="tile" viewBox="0 0 68 68"><rect width="68" height="68" rx="15" fill="url(#gDisc)"/><path d="M18 19q6-3 11-3l1.500 3h7L39 16q5 0 11 3 7 10 9 28-5 5-12 5l-3-4q-10 3-20 0l-3 4q-7 0-12-5 1-18 9-28z" fill="#f6f7fb"/><ellipse cx="26" cy="37" rx="4.300" ry="5" fill="#6a79c6"/><ellipse cx="42" cy="37" rx="4.300" ry="5" fill="#6a79c6"/></svg></div>
  <div class="slot running"><svg class="tile" viewBox="0 0 68 68"><rect width="68" height="68" rx="15" fill="url(#gWhite)"/><circle cx="34" cy="34" r="28" fill="#f7cf52"/><path d="M34 34L9.800 20a28 28 0 0 1 48.500 0z" fill="#cf4b3e"/><path d="M9.800 20a28 28 0 0 0 23 42L46 41 34 34 22 41z" fill="#459a57"/><path d="M34 20h24.300A28 28 0 0 1 33 62l13-21z" fill="#f7cf52"/><circle cx="34" cy="34" r="13" fill="#fff"/><circle cx="34" cy="34" r="10.500" fill="#4f83ee"/></svg></div>
  <i class="divider"></i>
  <div class="slot running"><svg class="vscode" viewBox="0 0 74 74"><circle cx="37" cy="37" r="35.800" fill="url(#gPost)" stroke="#fff" stroke-width="2"/><circle cx="55" cy="19" r="6" fill="#fff"/><path d="M49 25l-18 15-4 9 12-9 13-12z" fill="#fff"/><path d="M32 44L17 56l7 0 12-14" fill="#fff"/><path d="M52 21l7-4M33 40l16-13" stroke="#ee7a48" stroke-width="1.300"/></svg></div>
  <div class="slot running"><svg class="tile" viewBox="0 0 68 68"><rect x="1" y="1" width="66" height="66" rx="14" fill="#060606" stroke="url(#gMetal)" stroke-width="2.400"/><rect x="6" y="7" width="56" height="54" rx="9" fill="#2a2a2a"/><path d="M12 13l7 4.500-7 4.500" fill="none" stroke="#fff" stroke-width="2.600"/><path d="M23 26h10" stroke="#fff" stroke-width="2.600"/></svg></div>
  <div class="slot running"><svg class="tile"><use href="#github"/></svg></div>
  <i class="divider"></i>
  <div class="stack">
    <svg class="downloads" width="78" height="66" viewBox="0 0 78 66"><path d="M0 5q0-5 5-5h14q4 0 6 2.500l4 4h43q5 0 5 5V30H0z" fill="#4e9fd4"/><path d="M0 16q0-5 5-5h67q5 0 5 5v44q0 5-5 5H5q-5 0-5-5z" fill="#74c5f5"/><path d="M0 58h77" stroke="#5fb2e6" stroke-width="1.200"/><circle cx="38.500" cy="35" r="14.500" fill="#4e98d8"/><path d="M38.500 28v14M33 37l5.500 5.500L44 37" fill="none" stroke="#8fd0f8" stroke-width="2.200"/></svg>
    <div class="mini one">
      <svg width="78" height="38" viewBox="0 0 78 38"><rect width="78" height="38" rx="1.500" fill="#232325"/><path d="M0 0h12v38H0z" fill="#48494b"/><path d="M12 0h66v5H12z" fill="#39393b"/><path d="M1 2.500h4" stroke="#e2574c"/><path d="M3 8h6M3 11h5M3 14h6M3 17h5M3 20h6M3 24h5M3 28h6M3 32h5" stroke="#8b8b8d" stroke-width=".8"/><path d="M16 9h4v5h-4zM35 9h4v5h-4zM44 9h4v5h-4zM54 9h4v5h-4zM63 9h4v5h-4zM16 20h4v5h-4zM25 20h4v5h-4zM35 20h4v5h-4zM44 20h4v5h-4zM54 20h4v5h-4z" fill="#f0f0f0"/><path d="M25 9h5v4h-5zM63 20h5v4h-5z" fill="#58b2ea"/></svg>
      <svg class="corner"><use href="#finder"/></svg>
    </div>
    <div class="mini two">
      <svg width="79" height="50" viewBox="0 0 79 50"><rect width="79" height="50" fill="#fdfdfd"/><rect width="79" height="6" fill="#25292e"/><path d="M18 6v44" stroke="#d8dade"/><path d="M1 47.500h16" stroke="#4a7fe0" stroke-width="2"/><path d="M26 11h18" stroke="#333" stroke-width="1.400"/><path d="M26 14h36M27 20h18M27 22h12M27 28h20M27 33h18M57 21h12M62 28h7M62 34h7" stroke="#b4b7bb" stroke-width=".9"/></svg>
      <svg class="corner"><use href="#github"/></svg>
    </div>
    <div class="mini three">
      <svg width="79" height="48" viewBox="0 0 79 48"><rect width="79" height="48" fill="#fdfdfd"/><rect width="79" height="5" fill="#3c3d40"/><path d="M14 5h65v3H14z" fill="#1d2025"/><path d="M0 5h14v43H0z" fill="#4b4c4f"/><path d="M0 6h14v2H0z" fill="#3b78d8"/><path d="M16 20h46v4H16z" fill="#dbeafb"/><path d="M54 17h7v2h-7z" fill="#3aa55a"/><path d="M17 11h30M17 14h40M17 18h12M17 27h40M17 30h36M64 18h8M64 22h10" stroke="#a7b6c8" stroke-width=".9"/><path d="M19 37h36M19 39.500h12M19 43h14" stroke="#333" stroke-width="1.300"/></svg>
      <svg class="corner"><use href="#safari"/></svg>
    </div>
    <svg class="trash" width="60" height="78" viewBox="0 0 60 78"><path d="M4 10l8-6 6 2 6-6 8 5 6-4 10 7 8 2-4 12H6z" fill="#e9eaec"/><path d="M8 9l8 3 4-6M26 4l4 8 10-7M42 9l6 6" fill="none" stroke="#4a4d52" stroke-width="1.800"/><path d="M17 11l7-4 5 8-10 2z" fill="#4aa3c8"/><path d="M36 8l8 3-5 7z" fill="#c0564a"/><path d="M25 10l5 1-2 5z" fill="#6abf5a"/><path d="M1 10q29 16 58 0l-6 62q-2 6-23 6T8 72z" fill="url(#gTrash)" opacity=".93"/><path d="M1 10q0 8 29 8t29-8" fill="none" stroke="#b5b8ba" stroke-width="1.500"/></svg>
  </div>
</footer>
</body>
</html>
```
FILE: styles.css
```css
* { box-sizing: border-box; }

body {
  margin: 0;
  width: 2880px;
  height: 1800px;
  overflow: hidden;
  position: relative;
  font-family: Inter, "Liberation Sans", sans-serif;
  background:
    linear-gradient(90deg, transparent 0, rgba(1, 4, 9, .75) 500px, rgba(1, 4, 9, .75) 1500px, rgba(4, 10, 17, .5) 2880px),
    linear-gradient(180deg, #1b2f54 48px, #203a5e 150px, #294768 230px, #385672 320px, #3f5f7b 385px, #152750 395px, #142444 560px, #0c1c30 720px, #0a1724 850px, #24465f 875px, #2c536f 980px, #1d3d5a 1150px, #1b3754 1300px, #12273c 1500px, #0a1722 1640px, #07121c 1800px);
}

svg { display: block; flex: none; }
.defs { position: absolute; }

.waves { position: absolute; left: 0; bottom: 0; opacity: .2; }
.shore { position: absolute; left: 0; top: 48px; opacity: .7; }

/* Menu bar */
.menubar {
  position: relative;
  height: 48px;
  display: flex;
  justify-content: space-between;
  align-items: center;
  padding: 0 38px 1px 44px;
  background: linear-gradient(90deg, #12264b 0, #0f2346 1000px, #0d2045 1500px, #06183a 2000px, #041336 2450px, #0a1a36 2880px);
  color: #e9ebef;
  font-size: 26px;
  letter-spacing: -.02em;
}
.menus {
  display: grid;
  grid-template-columns: 70px 142px 84px 88px 101px 128px 176px 124px 84px 138px 80px;
  align-items: center;
}
.menus b { letter-spacing: .003em; }
.apple { width: 26px; height: 32px; }
.status { display: flex; align-items: center; }
.status svg:nth-child(1) { margin-right: 35px; }
.status svg:nth-child(2) { margin-right: 38px; }
.status svg:nth-child(3) { margin-right: 37px; }
.status svg:nth-child(4) { margin-right: 34px; }
.status svg:nth-child(5) { margin-right: 33px; }
.status time { letter-spacing: .001em; margin-top: -2px; white-space: pre; }

/* Browser window */
.window {
  position: absolute;
  left: 26px;
  top: 50px;
  width: 2900px;
  height: 1588px;
  border-radius: 22px 0 0 22px;
  overflow: hidden;
  background: #fff;
  box-shadow: 0 0 0 1.500px #05080c, 0 18px 50px rgba(0, 0, 0, .6);
}
.window::before {
  content: "";
  position: absolute;
  inset: 0 0 auto 0;
  height: 222px;
  border: 2px solid #5f6164;
  border-width: 2px 0 0 2px;
  border-radius: 22px 0 0 0;
}
.tabstrip {
  height: 84px;
  width: 2854px;
  padding: 2px 4px 0 42px;
  display: flex;
  align-items: center;
  background: #202124;
}
.light { width: 24px; height: 24px; border-radius: 50%; margin-right: 16px; flex: none; }
.red { background: #ec6a5e; }
.amber { background: #f4be4f; }
.green { background: #61c554; }
.tab {
  position: relative;
  align-self: flex-end;
  width: 480px;
  height: 68px;
  margin-left: 24px;
  padding: 0 23px 0 26px;
  display: flex;
  align-items: center;
  background: #35363a;
  border-radius: 16px 16px 0 0;
}
.tab::before, .tab::after {
  content: "";
  position: absolute;
  bottom: 0;
  width: 16px;
  height: 16px;
  background: radial-gradient(circle at 0 0, transparent 15.500px, #35363a 16px);
}
.tab::before { left: -16px; }
.tab::after { right: -16px; transform: scaleX(-1); }
.tab-title {
  margin: 0 15px 0 18px;
  flex: 1;
  min-width: 0;
  overflow: hidden;
  white-space: nowrap;
  font-size: 24px;
  letter-spacing: -.0136em;
  color: #fff;
  -webkit-mask-image: linear-gradient(90deg, #000 310px, transparent 352px);
  mask-image: linear-gradient(90deg, #000 310px, transparent 352px);
}
.newtab { margin: 16px 0 0 32px; }
.tabsearch { margin: 16px 0 0 auto; }

.toolbar {
  height: 72px;
  width: 2854px;
  padding: 0 14px 0 31px;
  display: flex;
  align-items: center;
  background: #35363a;
}
.toolbar > svg { margin-right: 38px; }
.toolbar > svg:nth-child(3) { margin-right: 37px; }
.toolbar > svg:nth-child(4) { margin-right: 30px; }
.omnibox {
  width: 2064px;
  height: 56px;
  padding: 0 21px 0 22px;
  border-radius: 28px;
  display: flex;
  align-items: center;
  background: #202124;
  font-size: 28px;
  color: #fff;
}
.scheme { width: 64px; margin: 0 17px 0 18px; border-right: 2px solid #5f6368; line-height: 32px; color: #e8eaed; }
.url { flex: 1; letter-spacing: -.0085em; }
.extensions { display: flex; align-items: center; gap: 32px; margin: 0 28px 0 28px; }
.avatar {
  width: 44px;
  height: 44px;
  border-radius: 50%;
  background: #3b8477;
  color: #fff;
  font: 24px/44px Roboto, sans-serif;
  text-align: center;
}
.toolbar > .kebab { margin: 0 0 0 auto; }
.abp { font: 700 15px "Open Sans", sans-serif; letter-spacing: -.3px; fill: #fff; text-anchor: middle; }
.css { font: 700 12px "Open Sans", sans-serif; fill: #fff; text-anchor: middle; }
.ess { font: 900 23px Lato, sans-serif; fill: #fff; text-anchor: middle; }

.bookmarks {
  height: 66px;
  padding: 0 0 10px 31px;
  display: grid;
  grid-template-columns: 139px 62px 166px 124px 114px 161px 310px 203px 134px 177px 307px 418px 296px 240px;
  align-items: center;
  background: #35363a;
  border-bottom: 2px solid #242528;
  color: #fff;
  font-size: 24px;
  letter-spacing: -.004em;
  white-space: nowrap;
}
.bookmarks a { display: flex; align-items: center; gap: 16px; }
.bookmarks .roomy { gap: 17.500px; }
.bookmarks .apps { gap: 19px; }
.bookmarks .tight { gap: 17.500px; letter-spacing: -.0106em; }
.bookmarks .ruled { border-left: 2px solid #5f6164; padding-left: 20px; height: 32px; }
.bookmarks .ruled.roomy { gap: 20px; }

/* Page */
.page {
  width: 2852px;
  height: 1366px;
  padding: 22px 0 0 20px;
  border-right: 2px solid #e6e6e6;
  color: #212529;
  font-size: 31px;
  line-height: 48px;
  letter-spacing: -.0105em;
}
h1, h2 { margin: 0; font-weight: 500; -webkit-text-stroke: .7px #212529; }
h1 { font-size: 78px; line-height: 96px; letter-spacing: -.0369em; }
h2 { font-size: 62.500px; line-height: 77px; letter-spacing: -.0335em; margin: 48px 0 15px; }
h2.second { margin: 81px 0 14px; }
.miner { margin: 15px 0 31px; }
.actions { display: flex; gap: 10px; padding-left: 110px; }
.btn {
  height: 76px;
  border: 0;
  border-radius: 8px;
  padding: 1px 2px 0 0;
  font: inherit;
  letter-spacing: inherit;
  color: #fff;
  white-space: nowrap;
}
.secondary { background: #6e757c; width: 160px; }
.primary { background: #316cf4; width: 372px; }
.danger { background: #ca4349; width: 146px; display: block; margin-top: -1px; }

table { width: 2810px; table-layout: fixed; border-collapse: collapse; color: #000; }
th, td { border: 2px solid; padding: 17px 16px 0; text-align: left; vertical-align: top; white-space: nowrap; }
th { height: 82px; background: #212529; color: #fff; border-color: #373b3e; font-size: 32px; letter-spacing: -.003em; }
.pending td { height: 110px; background: #d5f2fb; border-color: #bfdae2; }
.resolved td { height: 82px; background: #f3d7da; border-color: #dac2c4; }
.p1 { width: 324px; } .p2 { width: 258px; } .p3 { width: 248px; } .p4 { width: 516px; } .p5 { width: 238px; } .p6 { width: 438px; } .p7 { width: 250px; } .p9 { width: 286px; }
.r1 { width: 274px; } .r2 { width: 218px; } .r3 { width: 258px; } .r4 { width: 378px; } .r5 { width: 228px; } .r6 { width: 370px; } .r7 { width: 340px; } .r8 { width: 742px; }

/* Dock */
.dock {
  position: absolute;
  left: 70px;
  top: 1684px;
  width: 2740px;
  height: 106px;
  padding-left: 4px;
  display: flex;
  border: 2px solid #3b434c;
  border-radius: 34px;
  background: linear-gradient(90deg, #14202b, #111824 900px, #121c28 1800px, #131e29);
}
.slot { position: relative; width: 88.280px; flex: none; display: flex; justify-content: center; }
.tile { width: 68px; height: 68px; margin-top: 14px; }
.tile.wide { width: 70px; }
.vscode { width: 74px; height: 74px; margin-top: 11px; }
.running::after {
  content: "";
  position: absolute;
  left: calc(50% - 4px);
  bottom: 2px;
  width: 8px;
  height: 8px;
  border-radius: 50%;
  background: #8e98a4;
}
.badge {
  position: absolute;
  right: 0;
  top: 6px;
  width: 32px;
  height: 32px;
  border-radius: 50%;
  background: #dc4b3e;
  color: #fff;
  font-size: 19px;
  font-weight: 400;
  line-height: 32px;
  text-align: center;
}
.divider { width: 2px; height: 78px; margin: 12px 18px 0 20px; background: #48515c; flex: none; }
.stack { display: flex; padding-left: 5px; }
.downloads { margin-top: 16px; }
.mini { position: relative; }
.one { margin: 29px 0 0 9px; }
.two { margin: 24px 0 0 9px; }
.three { margin: 24px 0 0 11px; }
.corner { position: absolute; width: 26px; height: 26px; right: 1px; top: 31px; }
.two .corner, .three .corner { top: 36px; }
.trash { margin: 8px 0 0 18px; }
.blend rect { mix-blend-mode: multiply; opacity: .92; }
.petals { isolation: isolate; }
.month { font: 600 12px Inter, sans-serif; fill: #fff; text-anchor: middle; }
.day { font: 300 42px Inter, sans-serif; letter-spacing: -2px; fill: #222; text-anchor: middle; }
.shield { font: 700 9px Inter, sans-serif; fill: #fff; text-anchor: middle; }
.quote { font: 700 48px "Liberation Serif", serif; fill: #eda646; text-anchor: middle; }
.ij { font: 700 26px "Liberation Mono", monospace; letter-spacing: -3px; fill: #fff; }
```
